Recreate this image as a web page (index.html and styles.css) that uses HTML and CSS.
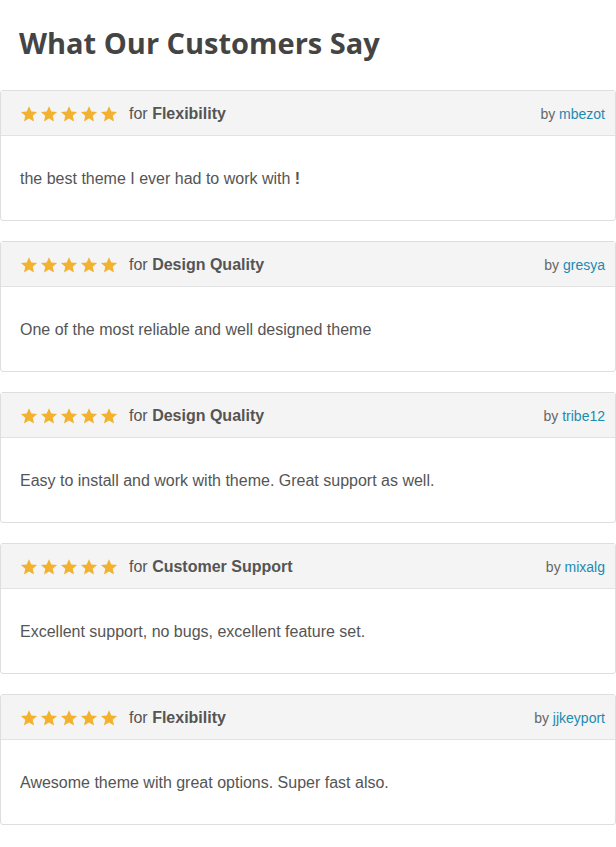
FILE: index.html
```html
<!DOCTYPE html>
<html lang="en">
<head>
    <meta charset="UTF-8">
    <meta name="viewport" content="width=device-width, initial-scale=1.0">
    <title>What Our Customers Say</title>
    <link rel="stylesheet" href="styles.css">
</head>
<body>
    <h1>What Our Customers Say</h1>

    <div class="reviews">
        <div class="review">
            <div class="review-head">
                <span class="stars">
                    <svg viewBox="0 0 24 24"><path d="M12 1.5l3.1 7.1 7.7.7-5.8 5.1 1.7 7.6L12 18l-6.7 4 1.7-7.6-5.8-5.1 7.7-.7z"/></svg>
                    <svg viewBox="0 0 24 24"><path d="M12 1.5l3.1 7.1 7.7.7-5.8 5.1 1.7 7.6L12 18l-6.7 4 1.7-7.6-5.8-5.1 7.7-.7z"/></svg>
                    <svg viewBox="0 0 24 24"><path d="M12 1.5l3.1 7.1 7.7.7-5.8 5.1 1.7 7.6L12 18l-6.7 4 1.7-7.6-5.8-5.1 7.7-.7z"/></svg>
                    <svg viewBox="0 0 24 24"><path d="M12 1.5l3.1 7.1 7.7.7-5.8 5.1 1.7 7.6L12 18l-6.7 4 1.7-7.6-5.8-5.1 7.7-.7z"/></svg>
                    <svg viewBox="0 0 24 24"><path d="M12 1.5l3.1 7.1 7.7.7-5.8 5.1 1.7 7.6L12 18l-6.7 4 1.7-7.6-5.8-5.1 7.7-.7z"/></svg>
                </span>
                <span class="for">for <strong>Flexibility</strong></span>
                <span class="by">by <a href="#">mbezot</a></span>
            </div>
            <p class="review-body">the best theme I ever had to work with <strong>!</strong></p>
        </div>

        <div class="review">
            <div class="review-head">
                <span class="stars">
                    <svg viewBox="0 0 24 24"><path d="M12 1.5l3.1 7.1 7.7.7-5.8 5.1 1.7 7.6L12 18l-6.7 4 1.7-7.6-5.8-5.1 7.7-.7z"/></svg>
                    <svg viewBox="0 0 24 24"><path d="M12 1.5l3.1 7.1 7.7.7-5.8 5.1 1.7 7.6L12 18l-6.7 4 1.7-7.6-5.8-5.1 7.7-.7z"/></svg>
                    <svg viewBox="0 0 24 24"><path d="M12 1.5l3.1 7.1 7.7.7-5.8 5.1 1.7 7.6L12 18l-6.7 4 1.7-7.6-5.8-5.1 7.7-.7z"/></svg>
                    <svg viewBox="0 0 24 24"><path d="M12 1.5l3.1 7.1 7.7.7-5.8 5.1 1.7 7.6L12 18l-6.7 4 1.7-7.6-5.8-5.1 7.7-.7z"/></svg>
                    <svg viewBox="0 0 24 24"><path d="M12 1.5l3.1 7.1 7.7.7-5.8 5.1 1.7 7.6L12 18l-6.7 4 1.7-7.6-5.8-5.1 7.7-.7z"/></svg>
                </span>
                <span class="for">for <strong>Design Quality</strong></span>
                <span class="by">by <a href="#">gresya</a></span>
            </div>
            <p class="review-body">One of the most reliable and well designed theme</p>
        </div>

        <div class="review">
            <div class="review-head">
                <span class="stars">
                    <svg viewBox="0 0 24 24"><path d="M12 1.5l3.1 7.1 7.7.7-5.8 5.1 1.7 7.6L12 18l-6.7 4 1.7-7.6-5.8-5.1 7.7-.7z"/></svg>
                    <svg viewBox="0 0 24 24"><path d="M12 1.5l3.1 7.1 7.7.7-5.8 5.1 1.7 7.6L12 18l-6.7 4 1.7-7.6-5.8-5.1 7.7-.7z"/></svg>
                    <svg viewBox="0 0 24 24"><path d="M12 1.5l3.1 7.1 7.7.7-5.8 5.1 1.7 7.6L12 18l-6.7 4 1.7-7.6-5.8-5.1 7.7-.7z"/></svg>
                    <svg viewBox="0 0 24 24"><path d="M12 1.5l3.1 7.1 7.7.7-5.8 5.1 1.7 7.6L12 18l-6.7 4 1.7-7.6-5.8-5.1 7.7-.7z"/></svg>
                    <svg viewBox="0 0 24 24"><path d="M12 1.5l3.1 7.1 7.7.7-5.8 5.1 1.7 7.6L12 18l-6.7 4 1.7-7.6-5.8-5.1 7.7-.7z"/></svg>
                </span>
                <span class="for">for <strong>Design Quality</strong></span>
                <span class="by">by <a href="#">tribe12</a></span>
            </div>
            <p class="review-body">Easy to install and work with theme. Great support as well.</p>
        </div>

        <div class="review">
            <div class="review-head">
                <span class="stars">
                    <svg viewBox="0 0 24 24"><path d="M12 1.5l3.1 7.1 7.7.7-5.8 5.1 1.7 7.6L12 18l-6.7 4 1.7-7.6-5.8-5.1 7.7-.7z"/></svg>
                    <svg viewBox="0 0 24 24"><path d="M12 1.5l3.1 7.1 7.7.7-5.8 5.1 1.7 7.6L12 18l-6.7 4 1.7-7.6-5.8-5.1 7.7-.7z"/></svg>
                    <svg viewBox="0 0 24 24"><path d="M12 1.5l3.1 7.1 7.7.7-5.8 5.1 1.7 7.6L12 18l-6.7 4 1.7-7.6-5.8-5.1 7.7-.7z"/></svg>
                    <svg viewBox="0 0 24 24"><path d="M12 1.5l3.1 7.1 7.7.7-5.8 5.1 1.7 7.6L12 18l-6.7 4 1.7-7.6-5.8-5.1 7.7-.7z"/></svg>
                    <svg viewBox="0 0 24 24"><path d="M12 1.5l3.1 7.1 7.7.7-5.8 5.1 1.7 7.6L12 18l-6.7 4 1.7-7.6-5.8-5.1 7.7-.7z"/></svg>
                </span>
                <span class="for">for <strong>Customer Support</strong></span>
                <span class="by">by <a href="#">mixalg</a></span>
            </div>
            <p class="review-body">Excellent support, no bugs, excellent feature set.</p>
        </div>

        <div class="review">
            <div class="review-head">
                <span class="stars">
                    <svg viewBox="0 0 24 24"><path d="M12 1.5l3.1 7.1 7.7.7-5.8 5.1 1.7 7.6L12 18l-6.7 4 1.7-7.6-5.8-5.1 7.7-.7z"/></svg>
                    <svg viewBox="0 0 24 24"><path d="M12 1.5l3.1 7.1 7.7.7-5.8 5.1 1.7 7.6L12 18l-6.7 4 1.7-7.6-5.8-5.1 7.7-.7z"/></svg>
                    <svg viewBox="0 0 24 24"><path d="M12 1.5l3.1 7.1 7.7.7-5.8 5.1 1.7 7.6L12 18l-6.7 4 1.7-7.6-5.8-5.1 7.7-.7z"/></svg>
                    <svg viewBox="0 0 24 24"><path d="M12 1.5l3.1 7.1 7.7.7-5.8 5.1 1.7 7.6L12 18l-6.7 4 1.7-7.6-5.8-5.1 7.7-.7z"/></svg>
                    <svg viewBox="0 0 24 24"><path d="M12 1.5l3.1 7.1 7.7.7-5.8 5.1 1.7 7.6L12 18l-6.7 4 1.7-7.6-5.8-5.1 7.7-.7z"/></svg>
                </span>
                <span class="for">for <strong>Flexibility</strong></span>
                <span class="by">by <a href="#">jjkeyport</a></span>
            </div>
            <p class="review-body">Awesome theme with great options. Super fast also.</p>
        </div>
    </div>
</body>
</html>
```

FILE: styles.css
```css
body {
    margin: 0;
    background-color: #ffffff;
    font-family: "Liberation Sans", Arial, sans-serif;
    color: #555555;
}

h1 {
    font-family: "Open Sans", sans-serif;
    font-weight: 700;
    font-size: 29px;
    line-height: 40px;
    color: #444444;
    margin: 0;
    padding: 23px 19px 27px;
}

.reviews {
    display: flex;
    flex-direction: column;
    gap: 20px;
}

.review {
    border: 1px solid #dedede;
    border-radius: 3px;
    background-color: #ffffff;
}

.review-head {
    display: flex;
    align-items: center;
    height: 44px;
    padding: 1px 10px 0 19px;
    box-sizing: border-box;
    height: 45px;
    background-color: #f4f4f4;
    border-bottom: 1px solid #e2e2e2;
}

.stars {
    display: flex;
    gap: 2px;
    margin-right: 11px;
}

.stars svg {
    width: 18px;
    height: 18px;
    fill: #f2b22f;
}

.for {
    font-size: 16px;
    color: #555555;
}

.by {
    margin-left: auto;
    font-size: 14px;
    color: #666666;
}

.by a {
    color: #1c8bb0;
    text-decoration: none;
}

.review-body {
    margin: 0;
    padding: 33px 19px 31px;
    line-height: 20px;
    font-size: 16px;
    color: #555555;
}
```
